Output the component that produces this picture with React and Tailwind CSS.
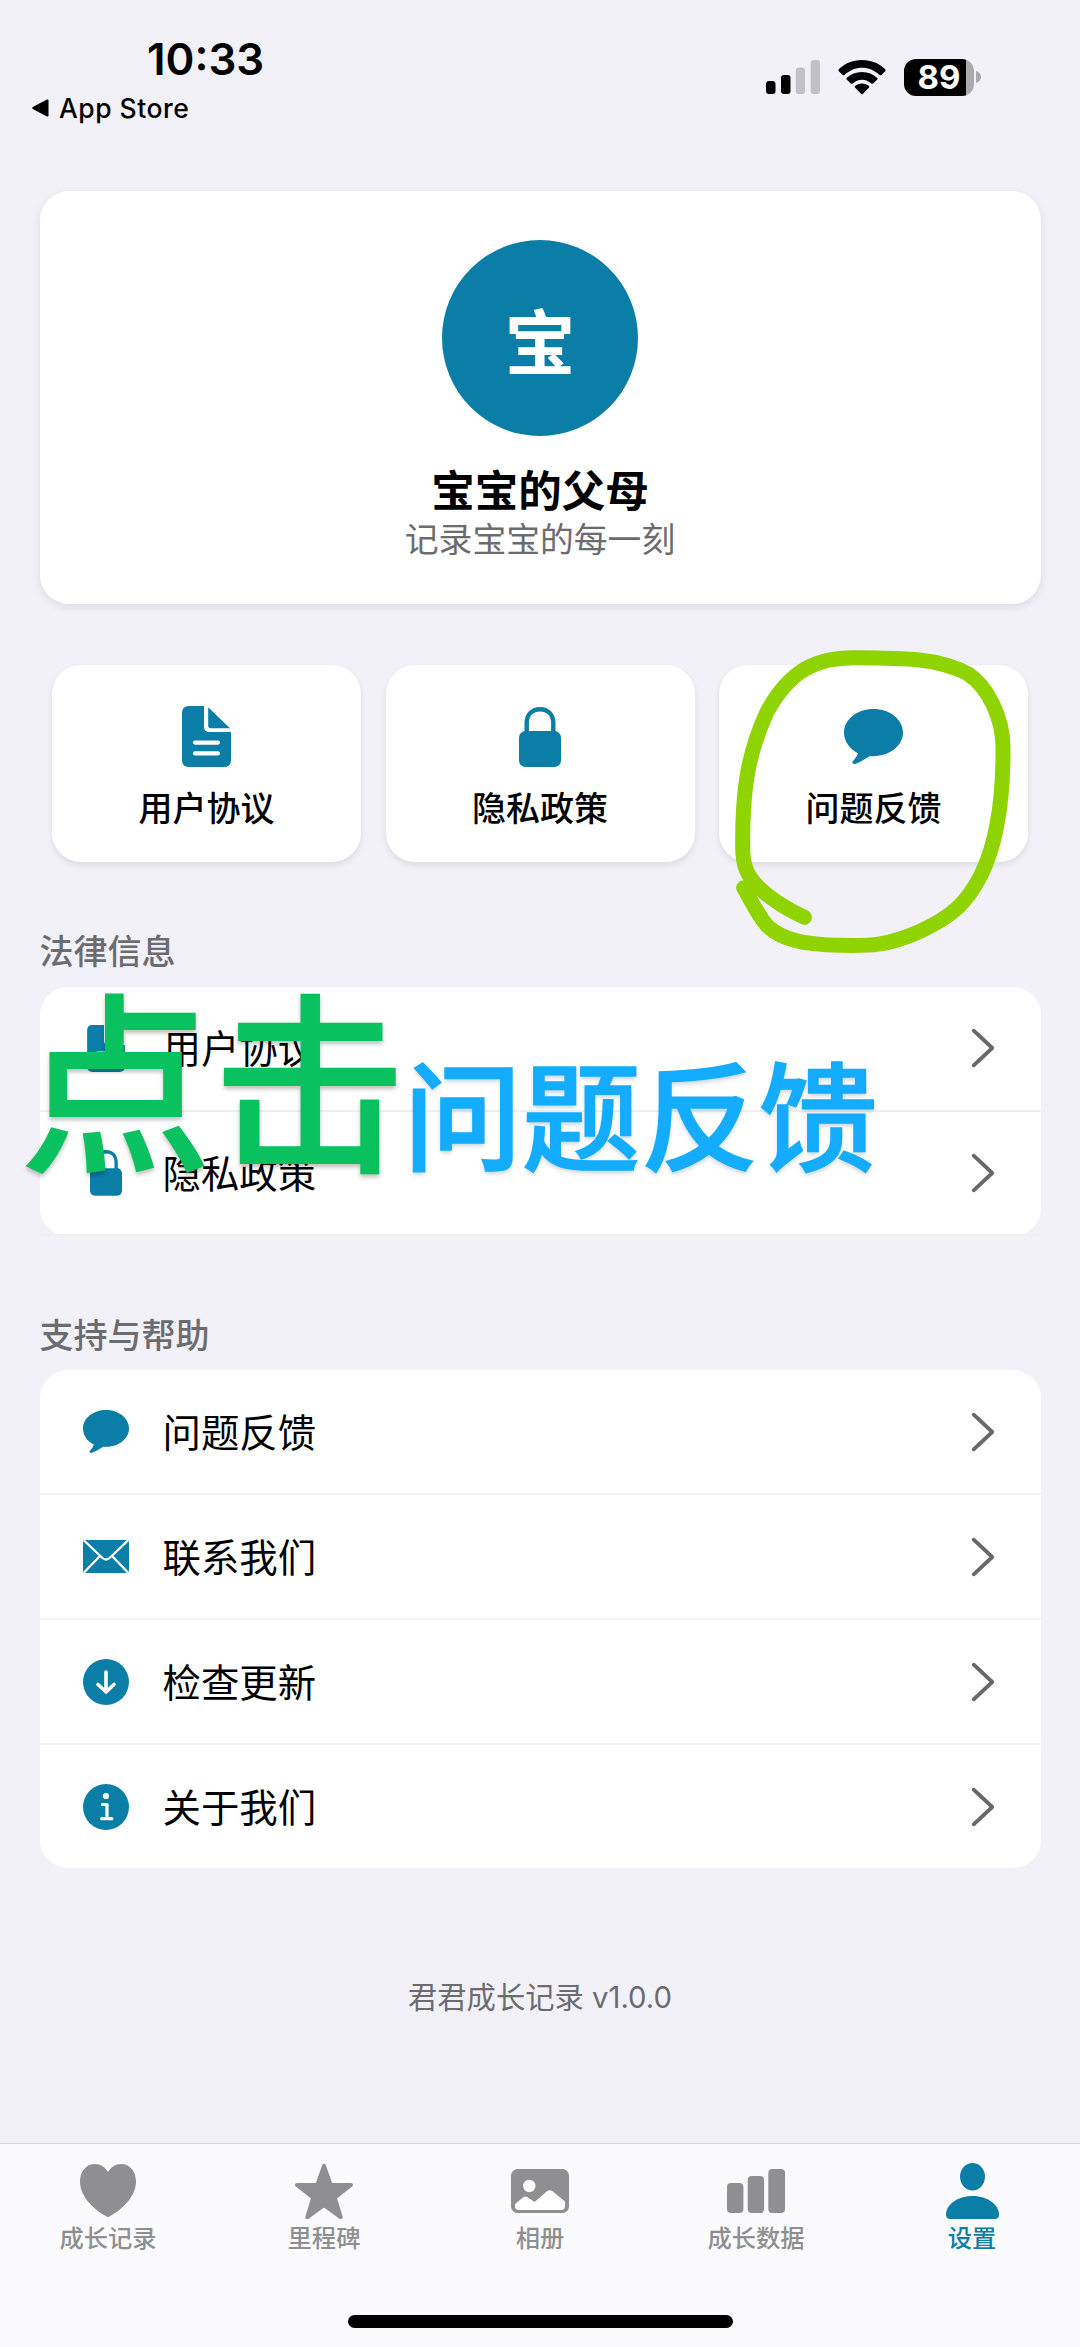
const CJK = 'font-["Noto_Sans_CJK_SC",sans-serif]';
const INTER = 'font-["Inter","Noto_Sans_CJK_SC",sans-serif]';

function DocIcon({ className }) {
  return (
    <svg viewBox="0 0 49 61" className={className} fill="currentColor">
      <path d="M7 0H22V20.500Q22 26 27.500 26H49V54Q49 61 42 61H7Q0 61 0 54V7Q0 0 7 0Z" />
      <path d="M26.200 1.200L48 22.300H28.500Q26.200 22.300 26.200 20Z" />
      <rect x="11" y="34.500" width="27" height="4.200" rx="2.100" fill="#fff" />
      <rect x="11" y="45.300" width="27" height="4.200" rx="2.100" fill="#fff" />
    </svg>
  );
}

function LockIcon({ className }) {
  return (
    <svg viewBox="0 0 42 61" className={className} fill="none">
      <path d="M7.700 28V17.500C7.700 8 13.500 3.200 21 3.200S34.300 8 34.300 17.500V28" stroke="currentColor" strokeWidth="4.400" />
      <rect y="25" width="42" height="36" rx="6.500" fill="currentColor" />
    </svg>
  );
}

function ChatIcon({ className }) {
  return (
    <svg viewBox="0 0 59 55" className={className} fill="currentColor">
      <path d="M29.500 0C45.800 0 59 10.500 59 23.600S45.800 47.200 29.500 47.200C28.300 47.200 27 47.300 26 47.100C21 50 16 53.500 11 54.900C8.500 55.200 7.600 53.600 9 52C11 49.800 13.200 47 14 44.300C5.500 40 0 32.500 0 23.600C0 10.500 13.200 0 29.500 0Z" />
    </svg>
  );
}

function MailIcon({ className }) {
  return (
    <svg viewBox="0 0 46 33" className={className} fill="none">
      <rect width="46" height="33" rx="2" fill="currentColor" />
      <path d="M1 .500L19.500 18Q23 21 26.500 18L45 .500M1 32.500L16.500 16.500M45 32.500L29.500 16.500" stroke="#fff" strokeWidth="2.300" />
    </svg>
  );
}

function DownloadIcon({ className }) {
  return (
    <svg viewBox="0 0 46 46" className={className} fill="none">
      <circle cx="23" cy="23" r="23" fill="currentColor" />
      <path d="M23 13V33M15 25.500L23 33L31 25.500" stroke="#fff" strokeWidth="3.600" strokeLinecap="round" strokeLinejoin="round" />
    </svg>
  );
}

function InfoIcon({ className }) {
  return (
    <svg viewBox="0 0 46 46" className={className} fill="none">
      <circle cx="23" cy="23" r="23" fill="currentColor" />
      <circle cx="23" cy="12" r="3.100" fill="#fff" />
      <path d="M19.500 20.500H24V34.500M18.800 34.700H28.800" stroke="#fff" strokeWidth="3.200" strokeLinecap="round" strokeLinejoin="round" />
    </svg>
  );
}

function Chevron() {
  return (
    <svg viewBox="0 0 24 40" className="mr-[46px] h-10 w-6 text-[#68686b]" fill="none">
      <path d="M2.700 2.700L21.300 20L2.700 37.300" stroke="currentColor" strokeWidth="3.800" strokeLinecap="round" strokeLinejoin="round" />
    </svg>
  );
}

function Shortcut({ icon, label, children }) {
  return (
    <div className="relative flex h-[197px] w-[309px] flex-col items-center rounded-[29px] bg-white pt-[41px] shadow-[0_3px_6px_rgba(0,0,0,0.09)]">
      <div className="flex h-[61px] items-center">{icon}</div>
      <div className="mt-[18px] h-11 text-[34px] leading-[44px] font-medium">{label}</div>
      {children}
    </div>
  );
}

function Row({ icon, label }) {
  return (
    <div className="flex min-h-0 flex-1 items-center">
      <div className="ml-[43px] flex w-[46px] justify-center text-[#0b7ea8]">{icon}</div>
      <div className="-mt-1 ml-[34px] flex-1 text-[38.400px] leading-[52px]">{label}</div>
      <Chevron />
    </div>
  );
}

function Section({ title, children }) {
  return (
    <section>
      <h2 className="h-12 pt-px text-[34px] leading-[48px] font-medium text-[#6c6c70]">{title}</h2>
      {children}
    </section>
  );
}

function Tab({ icon, label, active }) {
  return (
    <div className={`flex flex-1 flex-col items-center pt-[17px] ${active ? "text-[#0b7ea8]" : "text-[#8f8f91]"}`}>
      <div className="flex h-[60px] items-center">{icon}</div>
      <div className="h-8 text-[24.300px] leading-[32px] font-medium">{label}</div>
    </div>
  );
}

function StatusBar() {
  return (
    <header className={`flex h-[191px] justify-between ${INTER}`}>
      <div className="pl-8">
        <div className="mt-[34px] ml-[115px] h-[52px] text-[43.800px] leading-[52px] font-semibold">10:33</div>
        <div className="mt-[5px] flex h-[34px] items-center text-[26.500px] leading-[34px] font-medium">
          <svg viewBox="0 0 17 18" className="mr-[10px] h-[18px] w-[17px]">
            <path d="M16.500 1.500V16.500Q16.500 18 15 17.400L.800 10Q-.300 9 .800 8L15 .600Q16.500 0 16.500 1.500Z" />
          </svg>
          <span className="tracking-[0.500px]">App Store</span>
        </div>
      </div>
      <div className="mt-[59px] mr-[99px] flex h-[37px] items-start">
        <svg viewBox="0 0 54 34" className="mt-[1px] h-[34px] w-[54px]">
          <rect x="0" y="21" width="9.500" height="13" rx="3" />
          <rect x="15" y="15" width="9.500" height="19" rx="3" />
          <rect x="29.800" y="7.500" width="9.200" height="26.500" rx="3" fill="#c2c1c7" />
          <rect x="44.700" y="0" width="9.300" height="34" rx="3" fill="#c2c1c7" />
        </svg>
        <svg viewBox="0 0 48 35" className="mt-[1px] ml-[18px] h-[35px] w-[48px]">
          <path d="M24 0C33.500 0 41.500 3.500 47.200 9.300Q48 10.300 47.200 11.200L43.300 15Q42.500 15.600 41.600 14.900C36.500 10.300 30.500 7.700 24 7.700S11.500 10.300 6.400 14.900Q5.500 15.600 4.700 15L.800 11.200Q0 10.300 .800 9.300C6.500 3.500 14.500 0 24 0Z" />
          <path d="M24 11.900C30 11.900 35.200 14.200 39.300 17.900Q40 18.700 39.300 19.500L35.200 23.500Q34.300 24.200 33.400 23.500C30.700 21.200 27.600 19.700 24 19.700S17.300 21.200 14.600 23.500Q13.700 24.200 12.800 23.500L8.700 19.500Q8 18.700 8.700 17.900C12.800 14.200 18 11.900 24 11.900Z" />
          <path d="M24 23.400C26.800 23.400 29.200 24.300 31 25.900Q31.700 26.700 31 27.500L24.800 34Q24 34.700 23.200 34L17 27.500Q16.300 26.700 17 25.900C18.800 24.300 21.200 23.400 24 23.400Z" />
        </svg>
        <div className="ml-[18px] flex h-[37px] w-[70px] items-center justify-center rounded-[12px] bg-[linear-gradient(to_right,#000_62px,#aaaaad_62px)]">
          <span className="text-[33px] leading-[37px] font-bold text-white">89</span>
        </div>
        <svg viewBox="0 0 5 12" className="mt-[12px] ml-[2px] h-[12px] w-[5px]" fill="#aaaaad">
          <path d="M0 0Q5 1.500 5 6T0 12Z" />
        </svg>
      </div>
    </header>
  );
}

export default function App() {
  return (
    <div className={`flex h-[2347px] w-[1080px] flex-col overflow-hidden bg-[#f2f1f7] text-black ${CJK}`}>
      <StatusBar />
      <main className="mx-[39.500px] flex flex-1 flex-col">
        <div className="flex h-[413px] flex-col items-center rounded-[29px] bg-white pt-[49px] shadow-[0_3px_9px_rgba(0,0,0,0.09)]">
          <div className="flex h-[196px] w-[196px] items-center justify-center rounded-full bg-[#0b7ea8] text-white">
            <span className="text-[71px] leading-[94px] font-bold">宝</span>
          </div>
          <div className="mt-[27px] h-[52px] text-[43.500px] leading-[52px] font-bold">宝宝的父母</div>
          <div className="h-[46px] text-[33.800px] leading-[46px] text-[#6c6c6e]">记录宝宝的每一刻</div>
        </div>

        <div className="mx-[12.500px] mt-[61px] flex justify-between text-black">
          <Shortcut icon={<DocIcon className="h-[61px] w-[49px] text-[#0b7ea8]" />} label="用户协议" />
          <Shortcut icon={<LockIcon className="h-[61px] w-[42px] text-[#0b7ea8]" />} label="隐私政策" />
          <Shortcut icon={<ChatIcon className="h-[55px] w-[59px] text-[#0b7ea8]" />} label="问题反馈">
            <svg viewBox="0 0 1200 1080" className="absolute -top-[45px] -left-[39px] z-10 h-[360px] w-[400px] max-w-none" fill="none">
              <path
                d="M373 892C322 868 275 839 240 806C200 768 188 735 188 680C187 530 198 410 262 274C330 150 410 113 520 113C680 114 770 114 862 160C925 200 968 295 969 380C970 520 955 660 903 765C860 850 815 890 720 934C620 978 570 978 480 976C380 974 310 963 262 918C235 888 217 848 191 803"
                stroke="#8fd400"
                strokeWidth="45"
                strokeLinecap="round"
                strokeLinejoin="round"
              />
            </svg>
          </Shortcut>
        </div>

        <div className="mt-[63px]">
          <Section title="法律信息">
            <div className="relative mt-[14px] flex h-[249px] flex-col divide-y-2 divide-[#f0f0f2] rounded-[28px] bg-white">
              <Row icon={<DocIcon className="h-[47px] w-[38px]" />} label="用户协议" />
              <Row icon={<LockIcon className="h-[47px] w-[32px]" />} label="隐私政策" />
              <div className="absolute -top-[43px] -left-[21px] flex items-baseline border-0 whitespace-nowrap">
                <span className="text-[194px] leading-[260px] font-medium text-[#0ac160] [text-shadow:0_3px_4px_rgba(0,0,0,0.25)]">点击</span>
                <span className="relative top-1 -ml-[3px] text-[118.500px] leading-[160px] font-medium text-[#13acff] [-webkit-text-stroke:1.500px_#13acff] [text-shadow:0_3px_4px_rgba(0,60,120,0.22)]">问题反馈</span>
              </div>
            </div>
          </Section>
        </div>

        <div className="mt-[73px]">
          <Section title="支持与帮助">
            <div className="mt-[13px] flex h-[498px] flex-col divide-y-2 divide-[#f3f3f5] rounded-[28px] bg-white">
              <Row icon={<ChatIcon className="h-[43px] w-[46px]" />} label="问题反馈" />
              <Row icon={<MailIcon className="h-[33px] w-[46px]" />} label="联系我们" />
              <Row icon={<DownloadIcon className="h-[46px] w-[46px]" />} label="检查更新" />
              <Row icon={<InfoIcon className="h-[46px] w-[46px]" />} label="关于我们" />
            </div>
          </Section>
        </div>

        <div className={`mt-[110px] h-10 text-center text-[29.300px] leading-[40px] text-[#6c6c70] ${INTER}`}>君君成长记录 v1.0.0</div>
      </main>

      <nav className="h-[204px] border-t border-[#d9d8de] bg-[#fbfbfd]">
        <div className="flex h-[171px]">
          <Tab
            label="成长记录"
            icon={
              <svg viewBox="0 0 56 53" className="-mt-[2px] h-[53px] w-[56px]" fill="currentColor">
                <path d="M28 8C31 3 35.500 0 41 0C50 0 56 7.500 56 17.500C56 31 45 43.500 30 52.300Q28 53.300 26 52.300C11 43.500 0 31 0 17.500C0 7.500 6 0 15 0C20.500 0 25 3 28 8Z" />
              </svg>
            }
          />
          <Tab
            label="里程碑"
            icon={
              <svg viewBox="0 0 58 55" className="h-[55px] w-[58px]" fill="currentColor" stroke="currentColor" strokeWidth="4" strokeLinejoin="round">
                <path d="M29 2L35.700 21H56L39.700 33.700L45.700 53L29 41.200L12.300 53L18.300 33.700L2 21H22.300Z" />
              </svg>
            }
          />
          <Tab
            label="相册"
            icon={
              <svg viewBox="0 0 58 44" className="h-[44px] w-[58px]" fill="currentColor">
                <rect width="58" height="44" rx="6.500" />
                <circle cx="18.300" cy="17" r="6.200" fill="#fff" />
                <path d="M4 35L12 28.500Q14.500 26.500 17 28.500L23.500 33L36 22.300Q38.800 20 41.600 22.300L54 32.500V37Q54 41 50 41H8Q4 41 4 37Z" fill="#fff" />
              </svg>
            }
          />
          <Tab
            label="成长数据"
            icon={
              <svg viewBox="0 0 58 44" className="h-[44px] w-[58px]" fill="currentColor">
                <rect y="14" width="16.400" height="30" rx="4" />
                <rect x="20.700" y="7" width="16.400" height="37" rx="4" />
                <rect x="41.300" width="16.700" height="44" rx="4" />
              </svg>
            }
          />
          <Tab
            active
            label="设置"
            icon={
              <svg viewBox="0 0 53 56" className="h-[56px] w-[53px]" fill="currentColor">
                <ellipse cx="26.500" cy="13.700" rx="12.500" ry="13.700" />
                <path d="M26.500 33C42 33 53 42 53 51.500Q53 56 48.500 56H4.500Q0 56 0 51.500C0 42 11 33 26.500 33Z" />
              </svg>
            }
          />
        </div>
        <div className="mx-auto h-[13px] w-[385px] rounded-full bg-black" />
      </nav>
    </div>
  );
}
